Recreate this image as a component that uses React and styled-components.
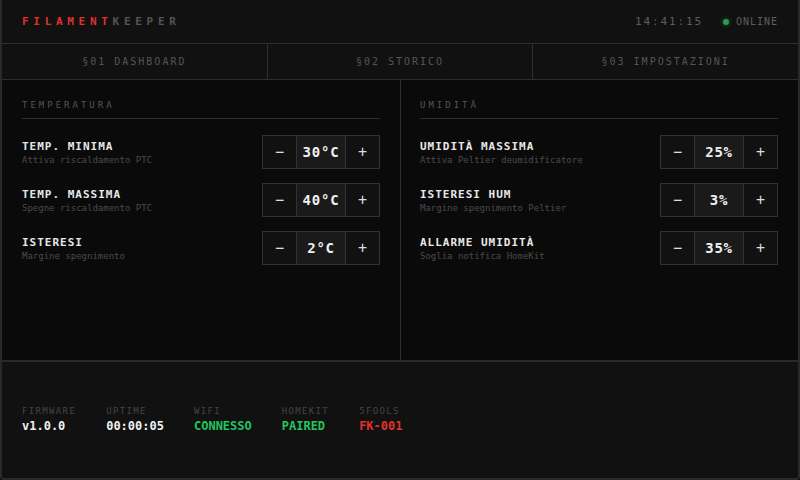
import React from "react";
import styled, { createGlobalStyle } from "styled-components";

const GlobalStyle = createGlobalStyle`
  html, body {
    margin: 0;
    padding: 0;
    background: #0a0a0a;
  }
  * {
    box-sizing: border-box;
  }
`;

const Frame = styled.div`
  width: 800px;
  height: 480px;
  display: flex;
  flex-direction: column;
  background: #0a0a0a;
  border: 2px solid #2a2a2a;
  border-top: none;
  border-radius: 0 0 4px 4px;
  font-family: "DejaVu Sans Mono", "Liberation Mono", monospace;
  overflow: hidden;
`;

const Header = styled.header`
  height: 44px;
  flex: 0 0 44px;
  display: flex;
  align-items: center;
  justify-content: space-between;
  padding: 0 20px;
  background: #111;
  border-bottom: 1px solid #2e2e2e;
`;

const Logo = styled.div`
  font-size: 11px;
  font-weight: bold;
  letter-spacing: 4.7px;
  color: #555;

  span {
    color: #e0312b;
  }
`;

const Status = styled.div`
  display: flex;
  align-items: center;
  color: #5e5e5e;
`;

const Clock = styled.span`
  font-size: 11px;
  letter-spacing: 1.85px;
  margin-right: 20px;
`;

const Dot = styled.span`
  width: 6px;
  height: 6px;
  border-radius: 50%;
  background: #22a04a;
  box-shadow: 0 0 4px rgba(34, 160, 74, 0.6);
  margin-right: 7px;
`;

const Online = styled.span`
  font-size: 10px;
  letter-spacing: 1px;
`;

const Nav = styled.nav`
  height: 36px;
  flex: 0 0 36px;
  display: flex;
  background: #111;
  border-bottom: 1px solid #2e2e2e;
`;

const Tab = styled.div`
  flex: 1;
  display: flex;
  align-items: center;
  justify-content: center;
  font-size: 10px;
  letter-spacing: 2px;
  color: #555;
  border-right: 1px solid #2e2e2e;

  &:last-child {
    border-right: none;
  }
`;

const Main = styled.main`
  height: 282px;
  flex: 0 0 282px;
  display: flex;
  border-bottom: 2px solid #2a2a2a;
`;

const Column = styled.section`
  flex: ${props => (props.first ? "0 0 399px" : "1")};
  padding: ${props => (props.first ? "19px 20px 0 20px" : "19px 20px 0 19px")};
  border-right: ${props => (props.first ? "1px solid #2e2e2e" : "none")};
`;

const SectionTitle = styled.h2`
  margin: 0 0 16px 0;
  padding-bottom: 7px;
  font-size: 9px;
  line-height: 12px;
  font-weight: normal;
  letter-spacing: 3px;
  color: #555;
  border-bottom: 1px solid #2e2e2e;
`;

const Rows = styled.div`
  display: flex;
  flex-direction: column;
  gap: 14px;
`;

const Row = styled.div`
  display: flex;
  align-items: center;
  justify-content: space-between;
  height: 34px;
`;

const Text = styled.div`
  padding-top: 1px;
`;

const Label = styled.div`
  font-size: 11px;
  line-height: 14px;
  font-weight: bold;
  letter-spacing: 1px;
  color: #e8e8e8;
`;

const Hint = styled.div`
  font-size: 9px;
  line-height: 12px;
  color: #4a4a4a;
`;

const Stepper = styled.div`
  display: flex;
  height: 34px;
  border: 1px solid #333;
  background: #111;
`;

const StepButton = styled.div`
  width: 33px;
  display: flex;
  align-items: center;
  justify-content: center;
  font-size: 15px;
  color: #ddd;
`;

const Value = styled.div`
  width: 50px;
  display: flex;
  align-items: center;
  justify-content: center;
  background: #1a1a1a;
  border-left: 1px solid #333;
  border-right: 1px solid #333;
  font-size: 14px;
  font-weight: bold;
  letter-spacing: 0.8px;
  color: #f0f0f0;
`;

const Footer = styled.footer`
  flex: 1;
  display: flex;
  align-items: center;
  gap: 30px;
  padding: 0 20px 3px 20px;
  background: #111;
`;

const Info = styled.div`
  display: flex;
  flex-direction: column;
`;

const InfoLabel = styled.div`
  font-size: 9px;
  line-height: 12px;
  letter-spacing: 1.35px;
  color: #444;
  margin-bottom: 2px;
`;

const InfoValue = styled.div`
  font-size: 12px;
  line-height: 14px;
  font-weight: bold;
  color: ${props => props.color || "#f0f0f0"};
`;

const temperature = [
  { label: "TEMP. MINIMA", hint: "Attiva riscaldamento PTC", value: "30°C" },
  { label: "TEMP. MASSIMA", hint: "Spegne riscaldamento PTC", value: "40°C" },
  { label: "ISTERESI", hint: "Margine spegnimento", value: "2°C" }
];

const humidity = [
  { label: "UMIDITÀ MASSIMA", hint: "Attiva Peltier deumidificatore", value: "25%" },
  { label: "ISTERESI HUM", hint: "Margine spegnimento Peltier", value: "3%" },
  { label: "ALLARME UMIDITÀ", hint: "Soglia notifica HomeKit", value: "35%" }
];

const info = [
  { label: "FIRMWARE", value: "v1.0.0" },
  { label: "UPTIME", value: "00:00:05" },
  { label: "WIFI", value: "CONNESSO", color: "#22c55e" },
  { label: "HOMEKIT", value: "PAIRED", color: "#22c55e" },
  { label: "5FOOLS", value: "FK-001", color: "#e0312b" }
];

const SettingRow = ({ label, hint, value }) => (
  <Row>
    <Text>
      <Label>{label}</Label>
      <Hint>{hint}</Hint>
    </Text>
    <Stepper>
      <StepButton>−</StepButton>
      <Value>{value}</Value>
      <StepButton>+</StepButton>
    </Stepper>
  </Row>
);

const SettingsColumn = ({ title, items, first }) => (
  <Column first={first}>
    <SectionTitle>{title}</SectionTitle>
    <Rows>
      {items.map(item => (
        <SettingRow key={item.label} {...item} />
      ))}
    </Rows>
  </Column>
);

const App = () => (
  <>
    <GlobalStyle />
    <Frame>
      <Header>
        <Logo>
          <span>FILAMENT</span>KEEPER
        </Logo>
        <Status>
          <Clock>14:41:15</Clock>
          <Dot />
          <Online>ONLINE</Online>
        </Status>
      </Header>
      <Nav>
        <Tab>§01 DASHBOARD</Tab>
        <Tab>§02 STORICO</Tab>
        <Tab>§03 IMPOSTAZIONI</Tab>
      </Nav>
      <Main>
        <SettingsColumn first title="TEMPERATURA" items={temperature} />
        <SettingsColumn title="UMIDITÀ" items={humidity} />
      </Main>
      <Footer>
        {info.map(item => (
          <Info key={item.label}>
            <InfoLabel>{item.label}</InfoLabel>
            <InfoValue color={item.color}>{item.value}</InfoValue>
          </Info>
        ))}
      </Footer>
    </Frame>
  </>
);

export default App;
